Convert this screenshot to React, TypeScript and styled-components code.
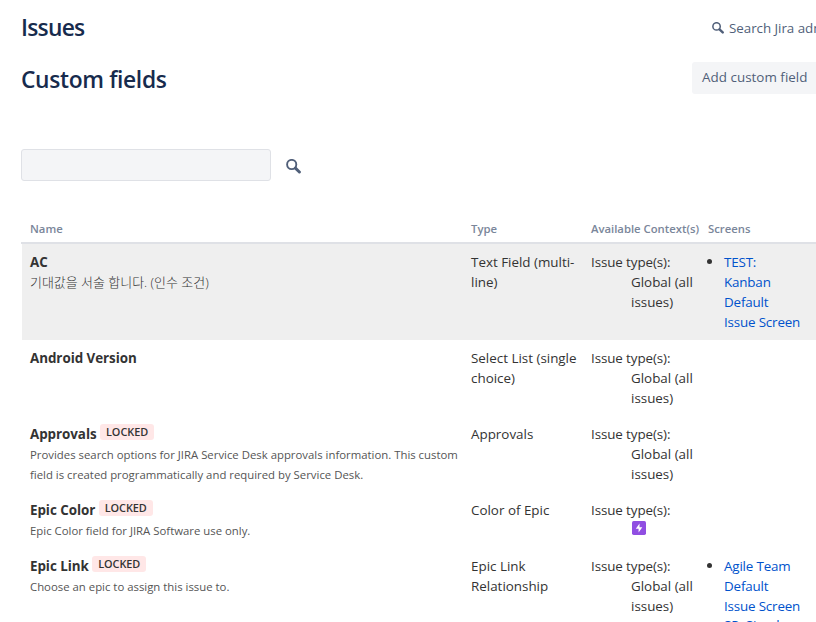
import React from "react";
import styled, { createGlobalStyle } from "styled-components";

const GlobalStyle = createGlobalStyle`
  *, *::before, *::after { box-sizing: border-box; }
  body {
    margin: 0;
    overflow: hidden;
    background: #fff;
    color: #333;
    font-family: "Open Sans", "Noto Sans CJK KR", sans-serif;
    font-size: 13.4px;
    line-height: 20px;
  }
`;

const Page = styled.main`
  height: 622px;
  overflow: hidden;
  padding-left: 21px;
`;

const HeaderRow = styled.header<{ $height: number; $gap?: number }>`
  display: flex;
  justify-content: space-between;
  height: ${(p) => p.$height}px;
  margin-top: ${(p) => p.$gap ?? 0}px;
`;

const Title = styled.h1<{ $drop?: number; $spacing?: number }>`
  margin: 0;
  padding-top: ${(p) => p.$drop ?? 0}px;
  color: #172b4d;
  font-size: 22.8px;
  font-weight: 560;
  letter-spacing: ${(p) => p.$spacing ?? -0.35}px;
  line-height: 32px;
  white-space: nowrap;
`;

const AdminSearch = styled.a`
  display: flex;
  align-items: center;
  gap: 5px;
  width: 104px;
  height: 20px;
  margin-top: 7px;
  overflow: hidden;
  color: #505f79;
  letter-spacing: -0.05px;
  white-space: nowrap;
`;

const AddButton = styled.button`
  width: 124px;
  height: 32px;
  padding: 0 0 2px 10px;
  border: 0;
  border-radius: 3px 0 0 3px;
  background: #f4f5f7;
  color: #505f79;
  font: inherit;
  letter-spacing: 0.03px;
  text-align: left;
  white-space: nowrap;
`;

const FilterBar = styled.form`
  display: flex;
  align-items: center;
  gap: 15px;
  margin-top: 55px;
`;

const FilterInput = styled.input`
  width: 250px;
  height: 32px;
  border: 1px solid #dfe1e6;
  border-radius: 3px;
  background: #f4f5f7;
`;

const Row = styled.div<{ $active?: boolean }>`
  display: grid;
  grid-template-columns: 441px 120px 117px 1fr;
  margin-left: 1px;
  padding: 8px 0;
  background: ${(p) => (p.$active ? "#efefef" : "transparent")};
`;

const HeadRow = styled(Row)`
  margin: 30px 0 0;
  padding: 8px 0 3px 1px;
  border-bottom: 2px solid #dfe1e6;
  color: #7a869a;
  font-size: 11.3px;
  font-weight: 600;
  white-space: nowrap;
`;

const Cell = styled.div`
  padding-left: 8px;
`;

const FieldName = styled.div`
  display: flex;
  height: 20px;
  font-weight: 700;
  letter-spacing: -0.05px;
  white-space: nowrap;
`;

const Badge = styled.span`
  width: 54px;
  height: 16px;
  margin-left: 3.5px;
  border-radius: 3px;
  background: #ffe7e7;
  font-size: 10.9px;
  font-weight: 600;
  line-height: 16px;
  text-align: center;
`;

const Description = styled.div<{ $korean?: boolean }>`
  padding-top: ${(p) => (p.$korean ? 0 : 1)}px;
  height: 20px;
  color: ${(p) => (p.$korean ? "#333" : "#555")};
  font-size: ${(p) => (p.$korean ? 12.98 : 11.37)}px;
  font-weight: ${(p) => (p.$korean ? 300 : 400)};
  white-space: nowrap;
`;

const TextLine = styled.div`
  height: 20px;
  white-space: nowrap;
`;

const ContextLabel = styled(TextLine)`
  letter-spacing: -0.1px;
`;

const ContextValue = styled.div`
  padding-left: 40px;
`;

const EpicIcon = styled.svg`
  display: block;
  margin: 1px 0 0 1px;
`;

const ScreenList = styled.ul`
  margin: 0;
  padding: 0;
  list-style: none;
`;

const ScreenItem = styled.li`
  display: grid;
  grid-template-columns: 16px 1fr;
  color: #0052cc;
  letter-spacing: -0.17px;
  & + & {
    margin-top: -1px;
  }
  &::before {
    content: "";
    width: 5px;
    height: 5px;
    margin: 7px 0 0 -1px;
    border-radius: 50%;
    background: #333;
  }
`;

const Glass = styled.svg<{ $drop?: number }>`
  flex: none;
  margin-top: ${(p) => p.$drop ?? 0}px;
`;

function SearchIcon({ size, drop }: { size: number; drop?: number }) {
  return (
    <Glass $drop={drop} width={size} height={size} viewBox="0 0 15 15" fill="none" stroke="#505f79">
      <circle cx="5.7" cy="5.5" r="4.6" strokeWidth="1.9" />
      <path d="M9.4 9.2 13.4 13" strokeWidth="3" strokeLinecap="round" />
    </Glass>
  );
}

type Field = {
  name: string;
  locked?: boolean;
  active?: boolean;
  korean?: boolean;
  description?: string[];
  type: string[];
  epic?: boolean;
  screens?: string[][];
};

const fields: Field[] = [
  {
    name: "AC",
    active: true,
    korean: true,
    description: ["기대값을 서술 합니다. (인수 조건)"],
    type: ["Text Field (multi-", "line)"],
    screens: [["TEST:", "Kanban", "Default", "Issue Screen"]],
  },
  { name: "Android Version", type: ["Select List (single", "choice)"] },
  {
    name: "Approvals",
    locked: true,
    description: [
      "Provides search options for JIRA Service Desk approvals information. This custom",
      "field is created programmatically and required by Service Desk.",
    ],
    type: ["Approvals"],
  },
  {
    name: "Epic Color",
    locked: true,
    description: ["Epic Color field for JIRA Software use only."],
    type: ["Color of Epic"],
    epic: true,
  },
  {
    name: "Epic Link",
    locked: true,
    description: ["Choose an epic to assign this issue to."],
    type: ["Epic Link", "Relationship"],
    screens: [["Agile Team", "Default", "Issue Screen"], ["SP: Simple"]],
  },
];

const lines = (items: string[]) => items.map((t) => <TextLine key={t}>{t}</TextLine>);

export default function App() {
  return (
    <>
      <GlobalStyle />
      <Page>
        <HeaderRow $height={51} $gap={11}>
          <Title $drop={1} $spacing={-0.75}>Issues</Title>
          <AdminSearch>
            <SearchIcon size={12} />
            <span>Search Jira admin</span>
          </AdminSearch>
        </HeaderRow>
        <HeaderRow $height={32}>
          <Title as="h2" $drop={2}>Custom fields</Title>
          <AddButton>Add custom field</AddButton>
        </HeaderRow>
        <FilterBar>
          <FilterInput aria-label="Filter custom fields" />
          <SearchIcon size={15} drop={3} />
        </FilterBar>

        <HeadRow>
          <Cell>Name</Cell>
          <Cell>Type</Cell>
          <Cell>Available Context(s)</Cell>
          <Cell>Screens</Cell>
        </HeadRow>
        {fields.map((f) => (
          <Row key={f.name} $active={f.active}>
            <Cell>
              <FieldName>
                {f.name}
                {f.locked && <Badge>LOCKED</Badge>}
              </FieldName>
              {f.description?.map((d) => (
                <Description key={d} $korean={f.korean}>{d}</Description>
              ))}
            </Cell>
            <Cell>{lines(f.type)}</Cell>
            <Cell>
              <ContextLabel>Issue type(s):</ContextLabel>
              <ContextValue>
                {f.epic ? (
                  <EpicIcon width="14" height="14" viewBox="0 0 14 14">
                    <rect width="14" height="14" rx="1.7" fill="#904ee2" />
                    <path d="M7.5 2.6v3.6h2.8L6.6 11.4V7.8H3.8Z" fill="#fff" />
                  </EpicIcon>
                ) : (
                  lines(["Global (all", "issues)"])
                )}
              </ContextValue>
            </Cell>
            <Cell>
              {f.screens && (
                <ScreenList>
                  {f.screens.map((s) => (
                    <ScreenItem key={s[0]}>
                      <div>{lines(s)}</div>
                    </ScreenItem>
                  ))}
                </ScreenList>
              )}
            </Cell>
          </Row>
        ))}
      </Page>
    </>
  );
}
